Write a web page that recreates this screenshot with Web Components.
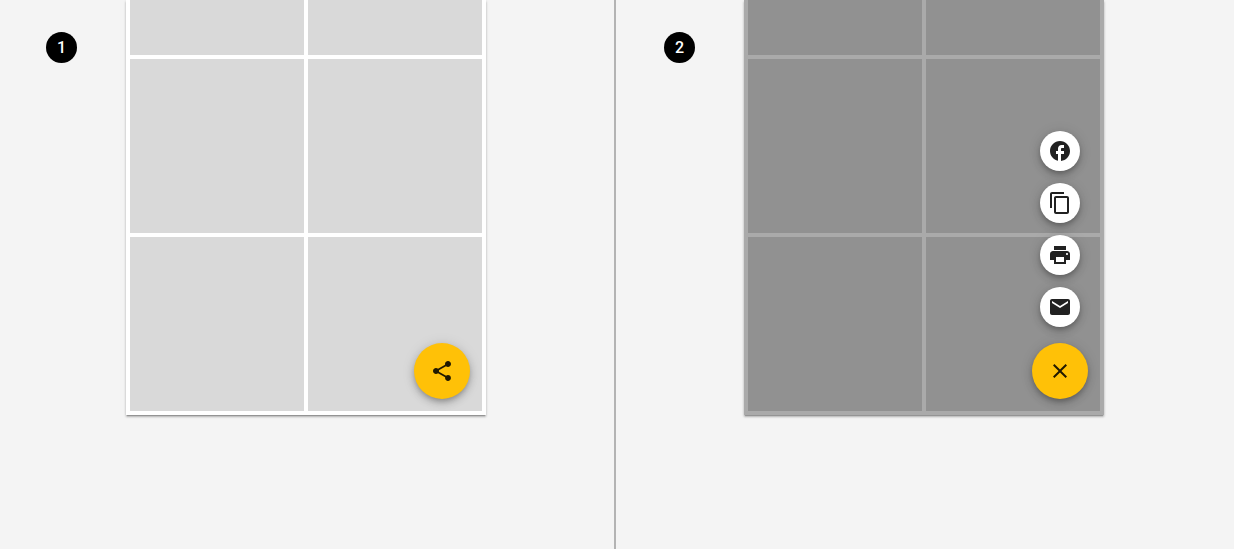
<!DOCTYPE html>
<html lang="en">
<head>
<meta charset="utf-8">
<title>Speed dial</title>
<style>
  body { margin: 0; background: #f4f4f4; font: 500 16px/20px Roboto, sans-serif; color: #212121; }
</style>
</head>
<body>
<speed-dial-page>
  <demo-panel divided>
    <step-badge slot="badge">1</step-badge>
    <tile-card>
      <fab-button slot="actions" label="Share" icon="share"></fab-button>
    </tile-card>
  </demo-panel>
  <demo-panel>
    <step-badge slot="badge">2</step-badge>
    <tile-card dimmed>
      <fab-button slot="actions" small label="Share on Facebook" icon="facebook"></fab-button>
      <fab-button slot="actions" small label="Copy" icon="copy"></fab-button>
      <fab-button slot="actions" small label="Print" icon="print"></fab-button>
      <fab-button slot="actions" small label="Email" icon="mail"></fab-button>
      <fab-button slot="actions" label="Close" icon="close"></fab-button>
    </tile-card>
  </demo-panel>
</speed-dial-page>

<script>
const ICONS = {
  share: '<path d="M18 16.08c-.76 0-1.44.3-1.96.77L8.91 12.7c.05-.23.09-.46.09-.7s-.04-.47-.09-.7l7.05-4.11c.54.5 1.25.81 2.04.81 1.66 0 3-1.34 3-3s-1.34-3-3-3-3 1.34-3 3c0 .24.04.47.09.7L8.04 9.81C7.5 9.31 6.79 9 6 9c-1.66 0-3 1.34-3 3s1.34 3 3 3c.79 0 1.5-.31 2.04-.81l7.12 4.16c-.05.21-.08.43-.08.65 0 1.61 1.31 2.92 2.92 2.92s2.92-1.31 2.92-2.92-1.31-2.92-2.92-2.92z"/>',
  facebook: '<path d="M22 12c0-5.52-4.48-10-10-10S2 6.48 2 12c0 4.84 3.44 8.87 8 9.8V15H8v-3h2V9.500C10 7.570 11.570 6 13.500 6H16v3h-2c-.55 0-1 .45-1 1v2h3v3h-3v6.950c5.050-.5 9-4.760 9-9.950z"/>',
  copy: '<path d="M16 1H4c-1.100 0-2 .9-2 2v14h2V3h12V1zm3 4H8c-1.100 0-2 .9-2 2v14c0 1.100.9 2 2 2h11c1.100 0 2-.9 2-2V7c0-1.100-.9-2-2-2zm0 16H8V7h11v14z"/>',
  print: '<path d="M19 8H5c-1.660 0-3 1.340-3 3v6h4v4h12v-4h4v-6c0-1.660-1.340-3-3-3zm-3 11H8v-5h8v5zm3-7c-.55 0-1-.45-1-1s.45-1 1-1 1 .45 1 1-.45 1-1 1zm-1-9H6v4h12V3z"/>',
  mail: '<path d="M20 4H4c-1.100 0-1.990.9-1.990 2L2 18c0 1.100.9 2 2 2h16c1.100 0 2-.9 2-2V6c0-1.100-.9-2-2-2zm0 4l-8 5-8-5V6l8 5 8-5v2z"/>',
  close: '<path d="M19 6.410 17.590 5 12 10.590 6.410 5 5 6.410 10.590 12 5 17.590 6.410 19 12 13.410 17.590 19 19 17.590 13.410 12z"/>'
};

class SpeedDialPage extends HTMLElement {
  constructor() {
    super();
    this.attachShadow({ mode: 'open' }).innerHTML = `
      <style>
        :host { display: grid; grid-template-columns: 1fr 1fr; min-height: 100vh; padding-right: 2px; box-sizing: border-box; }
      </style>
      <slot></slot>`;
  }
}

class DemoPanel extends HTMLElement {
  constructor() {
    super();
    this.attachShadow({ mode: 'open' }).innerHTML = `
      <style>
        :host { display: grid; grid-template-columns: 1fr 360px 1fr; align-items: start; box-sizing: border-box; }
        :host([divided]) { border-right: 2px solid #b3b3b3; padding-right: 2px; }
        .badge { justify-self: end; padding: 32px 49px 0 0; }
      </style>
      <div class="badge"><slot name="badge"></slot></div>
      <slot></slot>`;
  }
}

class StepBadge extends HTMLElement {
  constructor() {
    super();
    this.attachShadow({ mode: 'open' }).innerHTML = `
      <style>
        :host { display: grid; place-items: center; width: 31px; height: 31px; border-radius: 50%; background: #000; color: #fff; }
      </style>
      <span><slot></slot></span>`;
  }
}

class TileCard extends HTMLElement {
  constructor() {
    super();
    this.attachShadow({ mode: 'open' }).innerHTML = `
      <style>
        :host {
          --sheet: #fff; --tile: #d9d9d9;
          display: block; position: relative; background: var(--sheet);
          box-shadow: 0 2px 1px -1px rgba(0,0,0,.2), 0 2px 2px rgba(0,0,0,.18), 0 1px 3px rgba(0,0,0,.14);
        }
        :host([dimmed]) { --sheet: #aaa; --tile: #919191; }
        .tiles { display: grid; grid-template-columns: 1fr 1fr; grid-template-rows: 55px 174px 174px; gap: 4px; padding: 0 4px 4px; }
        .tiles div { background: var(--tile); }
        .actions { position: absolute; right: 16px; bottom: 16px; display: flex; flex-direction: column; align-items: center; gap: 12px; }
      </style>
      <div class="tiles"><div></div><div></div><div></div><div></div><div></div><div></div></div>
      <div class="actions"><slot name="actions"></slot></div>`;
  }
}

class FabButton extends HTMLElement {
  constructor() {
    super();
    this.attachShadow({ mode: 'open' });
  }
  connectedCallback() {
    this.shadowRoot.innerHTML = `
      <style>
        :host { display: block; --size: 56px; --fill: #ffc107; }
        :host([small]) { --size: 40px; --fill: #fff; }
        :host(:last-child:not(:first-child)) { margin-top: 4px; }
        button {
          display: grid; place-items: center; width: var(--size); height: var(--size);
          padding: 0; border: 0; border-radius: 50%; background: var(--fill); color: rgba(0,0,0,.87); cursor: pointer;
          box-shadow: 0 3px 5px -1px rgba(0,0,0,.2), 0 4px 8px rgba(0,0,0,.16), 0 1px 14px rgba(0,0,0,.1);
        }
        svg { display: block; width: 24px; height: 24px; fill: currentColor; }
      </style>
      <button type="button" aria-label="${this.getAttribute('label')}">
        <svg viewBox="0 0 24 24" aria-hidden="true">${ICONS[this.getAttribute('icon')]}</svg>
      </button>`;
  }
}

customElements.define('speed-dial-page', SpeedDialPage);
customElements.define('demo-panel', DemoPanel);
customElements.define('step-badge', StepBadge);
customElements.define('tile-card', TileCard);
customElements.define('fab-button', FabButton);
</script>
</body>
</html>
